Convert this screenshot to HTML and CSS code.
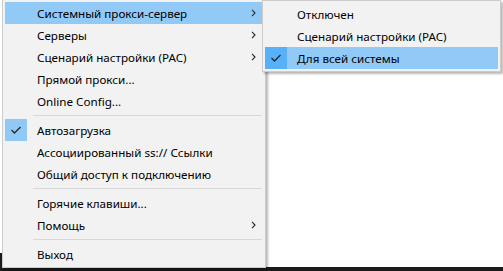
FILE: index.html
```html
<!DOCTYPE html>
<html lang="ru">
<head>
    <meta charset="UTF-8">
    <meta name="viewport" content="width=device-width, initial-scale=1.0">
    <title>Контекстное меню</title>
    <link rel="stylesheet" href="styles.css">
</head>
<body>

<div class="desktop">
    <div class="taskbar"></div>
    <div class="taskbar-edge"></div>

    <div class="menu main-menu">
        <div class="item active">
            <span class="check"></span>
            <span class="label">Системный прокси-сервер</span>
            <svg class="arrow" width="5" height="8" viewBox="0 0 5 8"><polyline points="1,0.8 4,4 1,7.2" /></svg>
        </div>
        <div class="item">
            <span class="check"></span>
            <span class="label">Серверы</span>
            <svg class="arrow" width="5" height="8" viewBox="0 0 5 8"><polyline points="1,0.8 4,4 1,7.2" /></svg>
        </div>
        <div class="item">
            <span class="check"></span>
            <span class="label">Сценарий настройки (PAC)</span>
            <svg class="arrow" width="5" height="8" viewBox="0 0 5 8"><polyline points="1,0.8 4,4 1,7.2" /></svg>
        </div>
        <div class="item">
            <span class="check"></span>
            <span class="label">Прямой прокси...</span>
        </div>
        <div class="item">
            <span class="check"></span>
            <span class="label">Online Config...</span>
        </div>
        <div class="separator"></div>
        <div class="item">
            <span class="check checked">
                <svg width="12" height="10" viewBox="0 0 12 10"><polyline points="1.5,5 4.5,8 10.5,2" /></svg>
            </span>
            <span class="label">Автозагрузка</span>
        </div>
        <div class="item">
            <span class="check"></span>
            <span class="label">Ассоциированный ss:// Ссылки</span>
        </div>
        <div class="item">
            <span class="check"></span>
            <span class="label">Общий доступ к подключению</span>
        </div>
        <div class="separator"></div>
        <div class="item">
            <span class="check"></span>
            <span class="label">Горячие клавиши...</span>
        </div>
        <div class="item">
            <span class="check"></span>
            <span class="label">Помощь</span>
            <svg class="arrow" width="5" height="8" viewBox="0 0 5 8"><polyline points="1,0.8 4,4 1,7.2" /></svg>
        </div>
        <div class="separator"></div>
        <div class="item">
            <span class="check"></span>
            <span class="label">Выход</span>
        </div>
    </div>

    <div class="menu sub-menu">
        <div class="item">
            <span class="check"></span>
            <span class="label">Отключен</span>
        </div>
        <div class="item">
            <span class="check"></span>
            <span class="label">Сценарий настройки (PAC)</span>
        </div>
        <div class="item active">
            <span class="check checked">
                <svg width="12" height="10" viewBox="0 0 12 10"><polyline points="1.5,5 4.5,8 10.5,2" /></svg>
            </span>
            <span class="label">Для всей системы</span>
        </div>
    </div>
</div>

</body>
</html>
```

FILE: styles.css
```css
body {
    margin: 0;
    background: #fff;
    font-family: 'Noto Sans', 'Open Sans', sans-serif;
    font-size: 11.65px;
    color: #000;
    overflow: hidden;
}
.desktop {
    position: relative;
    width: 503px;
    height: 271px;
    overflow: hidden;
}
.taskbar {
    position: absolute;
    left: 0;
    right: 0;
    bottom: 0;
    height: 4px;
    background: #1b1b1b;
}
.taskbar-edge {
    position: absolute;
    left: 0;
    bottom: 0;
    width: 2px;
    height: 18px;
    background: #1b1b1b;
}
.menu {
    position: absolute;
    background: #f2f2f2;
    border: 1px solid #cccccc;
    padding: 2px;
    box-shadow: 2px 2px 2px rgba(0, 0, 0, 0.28);
}
.main-menu {
    left: 2px;
    top: -1px;
    width: 258px;
}
.sub-menu {
    left: 262px;
    top: 0;
    width: 233px;
}
.item {
    display: flex;
    align-items: center;
    height: 22px;
}
.item.active {
    background: #91c9f7;
}
.check {
    width: 22px;
    height: 22px;
    flex: none;
    display: flex;
    align-items: center;
    justify-content: center;
}
.check.checked {
    background: #90c8f6;
}
.item.active .check.checked {
    background: #56b0fa;
}
.check svg polyline {
    fill: none;
    stroke: #2b2b2b;
    stroke-width: 1.4;
}
.label {
    margin-left: 10px;
    flex: 1;
    white-space: nowrap;
}
.arrow {
    flex: none;
    margin-right: 7px;
}
.arrow polyline {
    fill: none;
    stroke: #333;
    stroke-width: 1.2;
}
.separator {
    height: 1px;
    margin: 3px 1px 3px 28px;
    background: #d7d7d7;
}
```
